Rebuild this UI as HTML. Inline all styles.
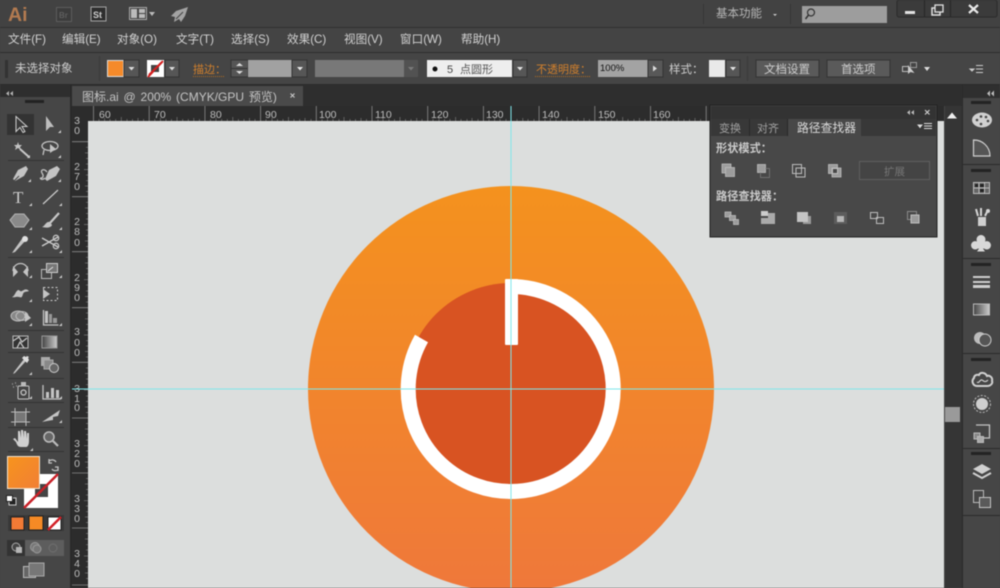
<!DOCTYPE html>
<html><head><meta charset="utf-8"><style>
html,body{margin:0;padding:0;width:1000px;height:588px;overflow:hidden;background:#444}
svg{display:block;filter:blur(.4px)}
text{font-family:"Liberation Sans","Noto Sans CJK SC",sans-serif}
.m{font-size:11.6px;fill:#d2d2d2}
.c{font-size:11.5px;fill:#cdcdcd}
.o{font-size:11px;fill:#d2802c}
.r{font-size:10.5px;fill:#bdbdbd}
.v{font-size:10.5px;fill:#bdbdbd;text-anchor:middle}
.i{fill:#c4c4c4;stroke:none}
.s{fill:none;stroke:#c4c4c4;stroke-width:1.3}
.p{font-size:11px;fill:#a0a0a0}
.b{font-size:11.2px;fill:#cbcbcb;font-weight:bold}
.k{fill:none;stroke:#bdbdbd;stroke-width:1}
.kf{fill:#9c9c9c;stroke:#bdbdbd;stroke-width:.8}
</style></head><body>
<svg width="1000" height="588" viewBox="0 0 1000 588" xmlns="http://www.w3.org/2000/svg">
<defs>
<linearGradient id="g" x1="0" y1="0" x2="0" y2="1"><stop offset="0" stop-color="#f4921e"/><stop offset="1" stop-color="#ef783b"/></linearGradient>
<linearGradient id="sw" x1="0" y1="0" x2="1" y2="1"><stop offset="0" stop-color="#f7941d"/><stop offset="1" stop-color="#f17f35"/></linearGradient>
<linearGradient id="gr" x1="0" y1="0" x2="1" y2="0"><stop offset="0" stop-color="#444"/><stop offset="1" stop-color="#ccc"/></linearGradient>
</defs>

<!-- chrome backgrounds -->
<rect width="1000" height="588" fill="#444"/>
<rect y="0" width="1000" height="27" fill="#424242"/>
<rect y="27" width="1000" height="1" fill="#303030"/>
<rect y="28" width="1000" height="24" fill="#444"/>
<rect y="52" width="1000" height="1" fill="#2e2e2e"/>
<rect y="53" width="1000" height="32" fill="#454545"/>
<rect y="84" width="1000" height="1" fill="#2b2b2b"/>
<rect y="85" width="1000" height="21" fill="#2e2e2e"/>

<!-- title bar -->
<text x="8" y="21" font-size="19.500" font-weight="bold" fill="#b27a50">Ai</text>
<rect x="56.500" y="7.500" width="15" height="14" fill="#3c3c3c" stroke="#5c5c5c"/>
<text x="59" y="18" font-size="8" fill="#5e5e5e" font-weight="bold">Br</text>
<rect x="91" y="7" width="15" height="14" fill="#2e2e2e" stroke="#a5a5a5"/>
<text x="93" y="18" font-size="9" fill="#cfcfcf" font-weight="bold">St</text>
<rect x="129.500" y="7.500" width="17" height="12" fill="#444" stroke="#aaa"/>
<rect x="131" y="9" width="6" height="9" fill="#bbb"/><rect x="139" y="9" width="6" height="4" fill="#bbb"/><rect x="139" y="14" width="6" height="4" fill="#bbb"/>
<path d="M149 12h6l-3 4z" fill="#bbb"/>
<path d="M188 7l-12 4-5 5 4 1-1 5 5-3 2 3 4-6z" fill="#a3a3a3"/>
<path d="M176 19l7-7" stroke="#444" stroke-width="1"/>
<rect x="703" y="4" width="1" height="20" fill="#363636"/>
<text x="716" y="17" font-size="11.500" fill="#b5b5b5">基本功能</text>
<path d="M773 14h4l-2 2z" fill="#ccc"/>
<rect x="790" y="4" width="1" height="20" fill="#363636"/>
<rect x="802" y="6" width="85" height="17" fill="#9d9d9d"/>
<circle cx="811" cy="12.500" r="3.500" fill="none" stroke="#333" stroke-width="1.200"/><path d="M808.500 15l-3 4" stroke="#333" stroke-width="1.500"/>
<rect x="897" y="0" width="100" height="17" rx="2" fill="#3b3b3b" stroke="#2a2a2a"/>
<rect x="924" y="0" width="1" height="17" fill="#272727"/><rect x="950" y="0" width="1" height="17" fill="#272727"/>
<rect x="905" y="11" width="10" height="3" fill="#e2e2e2"/>
<rect x="932" y="8" width="8" height="7" fill="none" stroke="#e2e2e2" stroke-width="1.500"/><rect x="935" y="5" width="8" height="7" fill="#3b3b3b" stroke="#e2e2e2" stroke-width="1.300"/>
<path d="M969 5l9 8M978 5l-9 8" stroke="#e8e8e8" stroke-width="2.200"/>

<!-- menu -->
<text class="m" x="8" y="43">文件(F)</text>
<text class="m" x="62" y="43">编辑(E)</text>
<text class="m" x="117" y="43">对象(O)</text>
<text class="m" x="176" y="43">文字(T)</text>
<text class="m" x="231" y="43">选择(S)</text>
<text class="m" x="287" y="43">效果(C)</text>
<text class="m" x="344" y="43">视图(V)</text>
<text class="m" x="400" y="43">窗口(W)</text>
<text class="m" x="461" y="43">帮助(H)</text>

<!-- control bar -->
<rect x="5" y="60" width="3" height="18" fill="#333"/>
<text class="c" x="15" y="72">未选择对象</text>
<rect x="99" y="56" width="1" height="25" fill="#3a3a3a"/>
<rect x="107.500" y="60.500" width="16" height="16" fill="#f58a2a" stroke="#ddd"/>
<rect x="124" y="60" width="15" height="17" fill="#565656" stroke="#333"/><path d="M128.500 67h6l-3 3.500z" fill="#ddd"/>
<rect x="147" y="60" width="17" height="17" fill="#fff"/><path d="M148 77l15-16" stroke="#d42020" stroke-width="2"/><rect x="151" y="65" width="8" height="7" fill="#444"/><path d="M149 75l13-13" stroke="#d42020" stroke-width="2"/>
<rect x="165" y="60" width="14" height="17" fill="#565656" stroke="#333"/><path d="M169 67h6l-3 3.500z" fill="#ddd"/>
<text class="o" x="193" y="73">描边：</text>
<path d="M193 76.500h31" stroke="#b06a20" stroke-dasharray="1 1"/>
<rect x="231" y="60" width="17" height="17" fill="#555" stroke="#333"/><path d="M236 66h7l-3.500-3zM236 71h7l-3.500 3z" fill="#ddd"/><path d="M231 68.500h17" stroke="#333"/>
<rect x="248" y="60" width="44" height="17" fill="#a1a1a1"/>
<rect x="292" y="60" width="15" height="17" fill="#565656" stroke="#333"/><path d="M297 67h6l-3 3.500z" fill="#e5e5e5"/>
<rect x="315" y="60" width="89" height="17" fill="#787878"/>
<rect x="404" y="60" width="14" height="17" fill="#525252"/><path d="M408 67h6l-3 3.500z" fill="#7a7a7a"/>
<rect x="427" y="60" width="85" height="17" fill="#eeeeee"/>
<circle cx="435" cy="69" r="2.500" fill="#111"/>
<text x="447" y="73" font-size="11" fill="#444">5</text><text x="460" y="73" font-size="11" fill="#555">点圆形</text>
<rect x="513" y="60" width="14" height="17" fill="#565656" stroke="#333"/><path d="M517 67h6l-3 3.500z" fill="#e5e5e5"/>
<text class="o" x="536" y="73">不透明度：</text>
<path d="M535 76.500h56" stroke="#b06a20" stroke-dasharray="1 1"/>
<rect x="598" y="60" width="50" height="17" fill="#a3a3a3"/>
<text x="600" y="71" font-size="9.500" fill="#111">100%</text>
<rect x="648" y="60" width="15" height="17" fill="#585858" stroke="#333"/><path d="M653 65.500v6l4-3z" fill="#ddd"/>
<text class="c" x="669" y="73">样式：</text>
<rect x="709" y="60" width="16" height="17" fill="#e9e9e9"/>
<rect x="726" y="60" width="14" height="17" fill="#565656" stroke="#333"/><path d="M730 67h6l-3 3.500z" fill="#e5e5e5"/>
<rect x="747" y="56" width="1" height="25" fill="#3a3a3a"/>
<rect x="756" y="60" width="63" height="17" fill="#5a5a5a" stroke="#333"/><text class="c" x="764" y="73">文档设置</text>
<rect x="827" y="60" width="63" height="17" fill="#5a5a5a" stroke="#333"/><text class="c" x="841" y="73">首选项</text>
<rect x="902.500" y="66.500" width="6" height="5" fill="none" stroke="#bbb"/><rect x="910.500" y="62.500" width="6" height="5" fill="none" stroke="#999"/><path d="M908 65l0 9 2.500-2 4 1z" fill="#ccc"/>
<path d="M924 67h6l-3 4z" fill="#ddd"/>
<path d="M970 69h4l-2 2zM976 65.500h7M976 69h7M976 72.500h7" stroke="#ccc" fill="#ccc"/>

<!-- tab -->
<rect x="72" y="86" width="231" height="20" fill="#4a4a4a"/>
<text x="82" y="101" font-size="12" word-spacing="1.500" fill="#c4c4c4">图标.ai @ 200%  (CMYK/GPU 预览)</text>
<path d="M290.500 93.500l4 4M294.500 93.500l-4 4" stroke="#c8c8c8" stroke-width="1.100"/>

<!-- rulers -->
<rect x="72" y="106" width="872" height="15" fill="#2c2c2c"/>
<rect x="72" y="106" width="16" height="482" fill="#2c2c2c"/>
<path d="M93.500 106v15M149.200 106v15M204.900 106v15M260.600 106v15M316.300 106v15M372 106v15M427.700 106v15M483.400 106v15M539.100 106v15M594.800 106v15M650.500 106v15M706.200 106v15" stroke="#8a8a8a" stroke-width=".8" fill="none"/>
<path d="M72 141.700h16M72 196.700h16M72 251.700h16M72 307.700h16M72 362.300h16M72 418h16M72 473h16M72 528h16M72 585h16" stroke="#8a8a8a" stroke-width=".8" fill="none"/>
<path d="M99 121v-2M104.600 121v-3M110 121v-2M115.700 121v-2M121.300 121v-4M127 121v-2M132.500 121v-2M138 121v-3M143.600 121v-2M154.800 121v-2M160.400 121v-3M166 121v-2M171.500 121v-2M177 121v-4M182.700 121v-2M188.300 121v-2M193.800 121v-3M199.400 121v-2M210.500 121v-2M216 121v-3M221.700 121v-2M227.300 121v-2M232.800 121v-4M238.400 121v-2M244 121v-2M249.500 121v-3M255 121v-2M266 121v-2M272 121v-3M277.500 121v-2M283 121v-2M288.500 121v-4M294 121v-2M299.700 121v-2M305 121v-3M311 121v-2M322 121v-2M327.500 121v-3M333 121v-2M339 121v-2M344 121v-4M350 121v-2M355.500 121v-2M361 121v-3M366.500 121v-2M378 121v-2M383 121v-3M389 121v-2M394.500 121v-2M400 121v-4M405.500 121v-2M411 121v-2M416.700 121v-3M422 121v-2M433 121v-2M439 121v-3M444.500 121v-2M450 121v-2M455.600 121v-4M461 121v-2M467 121v-2M472 121v-3M478 121v-2M489 121v-2M494.600 121v-3M500 121v-2M506 121v-2M517 121v-2M522.800 121v-3M528 121v-2M534 121v-2M545 121v-2M550.300 121v-3M556 121v-2M561.500 121v-2M567 121v-4M572.700 121v-2M578 121v-2M584 121v-3M589.400 121v-2M600.400 121v-2M606 121v-3M611.500 121v-2M617 121v-2M622.700 121v-4M628 121v-2M634 121v-2M639.400 121v-3M645 121v-2M656 121v-2M661.700 121v-3M667 121v-2M673 121v-2M678.400 121v-4M684 121v-2M689.500 121v-2M695 121v-3M700.600 121v-2" stroke="#777" stroke-width=".7" fill="none"/>
<path d="M88 147.300h-2M88 152.900h-3M88 158.500h-2M88 164h-2M88 169.600h-4M88 175h-2M88 180.700h-2M88 186h-3M88 191.500h-2M88 202.300h-2M88 208h-3M88 213.500h-2M88 219h-2M88 224.500h-4M88 230h-2M88 235.600h-2M88 241h-3M88 246.500h-2M88 257.300h-2M88 263h-3M88 268.500h-2M88 274h-2M88 279.700h-4M88 285h-2M88 291h-2M88 296.500h-3M88 302h-2M88 313h-2M88 318.800h-3M88 324.400h-2M88 330h-2M88 335h-4M88 340.700h-2M88 346h-2M88 351.500h-3M88 357h-2M88 368h-2M88 373.500h-3M88 379h-2M88 384.700h-2M88 390h-4M88 396h-2M88 401.500h-2M88 407h-3M88 412.500h-2M88 423.500h-2M88 429h-3M88 434.500h-2M88 440h-2M88 445.700h-4M88 451h-2M88 457h-2M88 462h-3M88 467.500h-2M88 478.500h-2M88 484h-3M88 489.500h-2M88 495h-2M88 500.700h-4M88 506h-2M88 511.700h-2M88 517h-3M88 522.500h-2M88 533.500h-2M88 539h-3M88 544.700h-2M88 550h-2M88 556h-4M88 561.500h-2M88 567h-2M88 573h-3M88 578.500h-2" stroke="#777" stroke-width=".7" fill="none"/>
<text class="r" x="99" y="118">60</text><text class="r" x="154" y="118">70</text><text class="r" x="210" y="118">80</text><text class="r" x="265" y="118">90</text><text class="r" x="319" y="118">100</text><text class="r" x="375" y="118">110</text><text class="r" x="431" y="118">120</text><text class="r" x="486" y="118">130</text><text class="r" x="542" y="118">140</text><text class="r" x="598" y="118">150</text><text class="r" x="653" y="118">160</text>
<text class="v" x="77" y="124">3</text><text class="v" x="77" y="134">0</text>
<text class="v" x="77" y="170">2</text><text class="v" x="77" y="180">7</text><text class="v" x="77" y="190">0</text>
<text class="v" x="77" y="225">2</text><text class="v" x="77" y="235">8</text><text class="v" x="77" y="246">0</text>
<text class="v" x="77" y="281">2</text><text class="v" x="77" y="291">9</text><text class="v" x="77" y="301">0</text>
<text class="v" x="77" y="335">3</text><text class="v" x="77" y="346">0</text><text class="v" x="77" y="356">0</text>
<text class="v" x="77" y="392">3</text><text class="v" x="77" y="402">1</text><text class="v" x="77" y="411">0</text>
<text class="v" x="77" y="447">3</text><text class="v" x="77" y="457">2</text><text class="v" x="77" y="467">0</text>
<text class="v" x="77" y="502">3</text><text class="v" x="77" y="512">3</text><text class="v" x="77" y="522">0</text>
<text class="v" x="77" y="557">3</text><text class="v" x="77" y="567">4</text><text class="v" x="77" y="577">0</text>

<!-- canvas -->
<rect x="88" y="121" width="856" height="467" fill="#dcdedd"/>
<circle cx="511" cy="389" r="203" fill="url(#g)"/>
<circle cx="511" cy="389" r="106" fill="#d85322"/>
<path d="M511 286.500A102.500 102.500 0 1 1 421.500 338.500" fill="none" stroke="#fff" stroke-width="15"/>
<rect x="505" y="279" width="13" height="66" rx="1" fill="#fff"/>
<path d="M511 121V588" stroke="#7fe6ea" stroke-width="1"/>
<path d="M88 389H944" stroke="#7fe6ea" stroke-width="1"/>
<path d="M511 106V121M72 389H88" stroke="#7fe6ea" stroke-width="1"/>

<!-- scrollbar -->
<rect x="945" y="106" width="17" height="482" fill="#353535"/>
<path d="M947 118.500h10l-5-6z" fill="#eee"/>
<rect x="945" y="407" width="15" height="15" fill="#9a9a9a"/>

<!-- left toolbar -->
<rect x="0" y="85" width="71" height="503" fill="#464646"/>
<rect x="0" y="85" width="71" height="12" fill="#2e2e2e"/>
<rect x="70" y="85" width="2" height="503" fill="#2a2a2a"/>
<path d="M9 91l-3 2.500 3 2.500zM13 91l-3 2.500 3 2.500z" fill="#b5b5b5"/>
<rect x="25" y="100" width="19" height="3" fill="#222"/>
<rect x="7" y="114" width="27" height="21" fill="#333"/>
<path d="M16 116.500v15l4-4 3 5 2-1-3-5h5z" fill="#3a3a3a" stroke="#cfcfcf"/>
<path d="M46 116v15l4-4 4 0z" fill="#bdbdbd"/>
<path d="M61 133h-3l3-3zM30 158h-3l3-3zM61 158h-3l3-3zM31 182h-3l3-3zM61 182h-3l3-3zM32 206h-3l3-3zM62 206h-3l3-3zM32 230h-3l3-3zM62 230h-3l3-3zM32 253h-3l3-3zM62 253h-3l3-3zM32 278h-3l3-3zM62 278h-3l3-3zM32 302h-3l3-3zM32 326h-3l3-3zM62 326h-3l3-3zM32 375h-3l3-3zM32 399h-3l3-3zM62 399h-3l3-3zM62 423h-3l3-3zM33 451h-3l3-3z" fill="#ccc"/>
<path d="M18 142l1 3 3 0-2 2 1 3-3-2-3 2 1-3-2-2 3 0z" class="i"/><path d="M20 149l9 8" stroke="#c8c8c8" stroke-width="2"/>
<ellipse cx="50" cy="146" rx="8" ry="4.500" class="s"/><path d="M44 149v4M50 144l6 5-6 4z" class="i"/><path d="M44 150l-1 5" class="s"/>
<rect x="8" y="160" width="56" height="1" fill="#333"/>
<path d="M26 166l-8 4-5 9 2 2 9-5 4-7z" class="i"/><path d="M14 181l5-5" stroke="#444"/>
<path d="M57 166l-8 4-4 9 2 2 9-5 4-7z" class="i"/><path d="M47 172c-3-4-7-2-5 1s1 5-1 5 1 3 4 0" class="s"/>
<text x="13" y="203" font-size="17" fill="#ccc" style="font-family:'Liberation Serif',serif">T</text>
<path d="M43 204l15-14" stroke="#ccc" stroke-width="1.200"/>
<path d="M15 214h9l5 6-5 7h-9l-5-7z" fill="#8a8a8a" stroke="#b5b5b5"/>
<path d="M59 213l-9 10" stroke="#c8c8c8" stroke-width="2.200"/><path d="M42 227c3-1 4-6 8-5l2 3c-1 3-6 3-10 2z" class="i"/>
<path d="M14 250l-2 3 3-1 12-13-1-2-2-1z" class="i"/><circle cx="25" cy="239" r="3" fill="#e0e0e0"/>
<path d="M42 238l16 9M42 246l16-9" stroke="#ccc" stroke-width="1.300"/><circle cx="56" cy="238" r="2.700" class="s"/><circle cx="56" cy="246" r="2.700" class="s"/>
<rect x="8" y="257" width="56" height="1" fill="#333"/>
<path d="M13 271a7.500 7.500 0 0 1 15 0" class="s"/><path d="M13 266v11l5-5zM28 266v11l-5-5z" class="i"/>
<rect x="41.500" y="269.500" width="10" height="9" fill="none" stroke="#bbb"/><rect x="46.500" y="263.500" width="11" height="9" fill="#777" stroke="#ccc"/><path d="M48 271l5-4" stroke="#ddd"/>
<path d="M12 297c3-1 3-5 6-7 2 0 2 2 4 1s4-3 7 0c-2 1-5 0-6 3s-1 4-4 3-4 1-7 0z" class="i"/>
<rect x="43.500" y="287.500" width="14" height="13" fill="none" stroke="#ccc" stroke-dasharray="2 2"/><path d="M43 289v10l7-5z" class="i"/>
<ellipse cx="18" cy="316" rx="7" ry="5" fill="#888" stroke="#bbb"/><ellipse cx="22" cy="316" rx="6" ry="4.500" fill="none" stroke="#bbb"/><path d="M25 312l6 6-6 4z" class="i"/>
<path d="M43.500 310v15h15" class="s"/><rect x="45" y="311" width="3" height="12" class="i"/><rect x="49" y="314" width="3" height="9" fill="#999"/><rect x="53" y="318" width="4" height="5" fill="#999"/>
<rect x="8" y="330" width="56" height="1" fill="#333"/>
<rect x="13" y="336" width="15" height="12" fill="#333" stroke="#bbb"/><path d="M13 341l6-4 3 5 5-4M17 348l3-6 4 6" class="s"/>
<rect x="42" y="336" width="15" height="12" fill="url(#gr)" stroke="#999"/>
<rect x="8" y="352" width="56" height="1" fill="#333"/>
<path d="M14 372l-1 2 2-1 11-12-2-2z" class="i"/><path d="M22 358l5 5 2-3-1-2 1-1-2-1-1 1-2-1z" fill="#ddd"/>
<rect x="41" y="357" width="9" height="9" fill="#aaa"/><rect x="44" y="360" width="9" height="9" fill="#888" stroke="#aaa"/><circle cx="54" cy="368" r="4.500" fill="#666" stroke="#ccc"/>
<rect x="8" y="378" width="56" height="1" fill="#333"/>
<rect x="18" y="386" width="11" height="13" rx="1" fill="#444" stroke="#c5c5c5"/><circle cx="23.500" cy="392.500" r="2.500" class="s"/><rect x="21" y="382" width="5" height="4" fill="#bbb"/><path d="M12 384h1M15 383h1M13 387h1M16 386h1" stroke="#999" stroke-width="1.500"/>
<path d="M43 385v14h18" class="s"/><rect x="46" y="392" width="3" height="6" class="i"/><rect x="51" y="388" width="3" height="10" class="i"/><rect x="56" y="390" width="3" height="8" class="i"/>
<rect x="8" y="402" width="56" height="1" fill="#333"/>
<rect x="15" y="412" width="11" height="10" fill="#777"/><path d="M15 408v18M26 408v18M11 412h19M11 422h19" stroke="#bbb"/>
<path d="M42 422l18-12-2 6-5 1 0 3-6 1z" class="i"/>
<rect x="8" y="427" width="56" height="1" fill="#333"/>
<path d="M13 439l3 3c1 3 2 5 5 5h5c2 0 3-3 3-6v-8h-2v6l-1-8h-2v7l-1-8h-2v8l-1-7h-2v11l-3-4z" fill="#d0d0d0"/>
<circle cx="49" cy="437" r="5" fill="#666" stroke="#bbb" stroke-width="1.500"/><path d="M53 441l5 5" stroke="#bbb" stroke-width="2.200"/>
<rect x="8" y="451" width="56" height="1" fill="#333"/>
<!-- swatches -->
<path d="M49 461c3-2 6-1 7 1M49 459v4h3M58 470c-2 1-5 1-6-1M58 471v-4h-3" class="s"/>
<rect x="24" y="474" width="34" height="34" fill="#fff"/>
<rect x="35" y="484" width="13" height="13" fill="#444"/>
<path d="M24 508l34-34" stroke="#c92028" stroke-width="2.500"/>
<rect x="7.500" y="456.500" width="32" height="32" fill="url(#sw)" stroke="#f3e4d0"/>
<rect x="9" y="498" width="7" height="7" fill="#222" stroke="#ccc"/><rect x="6.500" y="495.500" width="6" height="6" fill="#fff" stroke="#222"/>
<rect x="8" y="515" width="56" height="16" fill="#393939"/>
<rect x="11" y="517" width="13" height="13" fill="#f27a35" stroke="#222"/>
<rect x="29" y="516" width="14" height="14" fill="#f58a25" stroke="#222"/>
<rect x="48" y="517" width="13" height="13" fill="#fff" stroke="#222"/><path d="M48 530l13-13" stroke="#d32027" stroke-width="2.500"/>
<rect x="7" y="540" width="18" height="16" fill="#333"/>
<rect x="25" y="540" width="39" height="16" fill="#5d5d5d"/>
<circle cx="16" cy="547" r="4" fill="#444" stroke="#aaa"/><rect x="16" y="547" width="6" height="6" fill="#b5b5b5"/>
<circle cx="35" cy="547" r="4.500" fill="#777" stroke="#999"/><circle cx="37" cy="549" r="4" fill="#777" stroke="#999"/>
<circle cx="53" cy="548" r="4" fill="none" stroke="#6f6f6f"/>
<rect x="23.500" y="566.500" width="12" height="11" fill="#666" stroke="#bbb"/><rect x="29" y="563" width="15" height="13" fill="#777" stroke="#aaa"/>

<!-- right dock -->
<rect x="962" y="85" width="38" height="503" fill="#464646"/>
<rect x="962" y="85" width="38" height="13" fill="#2f2f2f"/>
<rect x="962" y="85" width="1" height="503" fill="#2a2a2a"/>
<path d="M990 90.500l-3 3 3 3zM994 90.500l-3 3 3 3z" fill="#bdbdbd"/>
<rect x="971" y="101" width="20" height="3" fill="#232323"/>
<rect x="971" y="169" width="20" height="3" fill="#232323"/>
<rect x="971" y="263" width="20" height="3" fill="#232323"/>
<rect x="971" y="358" width="20" height="3" fill="#232323"/>
<rect x="971" y="452" width="20" height="3" fill="#232323"/>
<rect x="962" y="164" width="38" height="1" fill="#2a2a2a"/>
<rect x="962" y="258" width="38" height="1" fill="#2a2a2a"/>
<rect x="962" y="353" width="38" height="1" fill="#2a2a2a"/>
<rect x="962" y="448" width="38" height="1" fill="#2a2a2a"/>
<rect x="962" y="515" width="38" height="1" fill="#2a2a2a"/>
<ellipse cx="982" cy="120" rx="10" ry="7.500" fill="#d0d0d0"/>
<circle cx="977" cy="120" r="1.300" fill="#444"/><circle cx="981" cy="116.500" r="1.300" fill="#444"/><circle cx="986" cy="117" r="1.300" fill="#444"/><circle cx="988" cy="121" r="1.300" fill="#444"/><circle cx="981" cy="124" r="1.300" fill="#444"/>
<path d="M973.500 140v16h16.500a16 16 0 0 0-16.500-16z" fill="#555" stroke="#d0d0d0" stroke-width="1.200"/>
<rect x="973.500" y="182.500" width="16" height="11" fill="#666" stroke="#bbb"/>
<path d="M974 188h15M979 183v10M984.500 183v10" stroke="#bbb"/><rect x="975" y="184" width="3" height="3" fill="#222"/><rect x="980" y="184" width="4" height="3" fill="#222"/><rect x="980" y="189" width="4" height="3" fill="#222"/>
<rect x="978" y="217" width="8" height="9" fill="#cfcfcf"/><path d="M978 216l-2-7M981 216l0-8M985 216l3-6" stroke="#d5d5d5" stroke-width="2"/><circle cx="988" cy="211" r="2" fill="#d5d5d5"/>
<path d="M981 235a4.500 4.500 0 0 1 4 6.500 4.200 4.200 0 1 1-1 7h-1l2 3h-8l2-3h-1a4.200 4.200 0 1 1-1-7 4.500 4.500 0 0 1 4-6.500z" fill="#d8d8d8"/>
<rect x="973" y="276" width="17" height="2" fill="#cfcfcf"/><rect x="973" y="281" width="17" height="2" fill="#cfcfcf"/><rect x="973" y="285" width="17" height="3" fill="#cfcfcf"/>
<rect x="973.500" y="304" width="16" height="11" fill="url(#gr)" stroke="#bbb"/>
<circle cx="980" cy="338" r="6" fill="#bbb"/><circle cx="985" cy="340" r="6" fill="#555" stroke="#ccc"/>
<path d="M974 378c-3 3-1 8 3 8h10c4 0 6-3 5-5 1-4-3-6-5-5-2-4-7-4-8-1-3-1-5 1-5 3z" fill="none" stroke="#d0d0d0" stroke-width="2"/><path d="M977 382c2 2 3-3 5-2s3 3 6 0" fill="none" stroke="#d0d0d0" stroke-width="1.200"/>
<circle cx="982" cy="404" r="6" fill="#cfcfcf"/><circle cx="982" cy="404" r="8.500" fill="none" stroke="#bbb" stroke-dasharray="2 1.500"/>
<path d="M976 425h13.500v13h-6" class="s"/>
<rect x="974" y="433" width="6" height="6" fill="#888" stroke="#bbb"/><rect x="977.500" y="436.500" width="6" height="6" fill="#aaa" stroke="#bbb"/>
<path d="M982 464l9 5-9 5-9-5z" fill="#d0d0d0"/><path d="M973 473l9 5 9-5" fill="none" stroke="#d0d0d0" stroke-width="2"/>
<rect x="973.500" y="490.500" width="10" height="12" fill="none" stroke="#bbb"/><rect x="979.500" y="497.500" width="11" height="10" fill="#5a5a5a" stroke="#c5c5c5"/>

<!-- pathfinder panel -->
<rect x="710" y="105" width="227" height="132" fill="#484848" stroke="#222"/>
<rect x="711" y="106" width="225" height="13" fill="#333"/>
<rect x="711" y="119" width="225" height="17" fill="#383838"/>
<path d="M910 110l-3 2.500 3 2.500zM914 110l-3 2.500 3 2.500z" fill="#bbb"/>
<path d="M925 110l4.500 4.500M929.500 110l-4.500 4.500" stroke="#ccc" stroke-width="1.200"/>
<rect x="749" y="119" width="1" height="17" fill="#282828"/><rect x="787" y="119" width="1" height="17" fill="#282828"/>
<rect x="788" y="119" width="73" height="17" fill="#484848"/>
<text class="p" x="719" y="132">变换</text>
<text class="p" x="757" y="132">对齐</text>
<text x="797" y="132" font-size="11.800" fill="#dadada">路径查找器</text>
<path d="M918 125h4l-2 2.500zM924 123.500h8M924 126h8M924 128.500h8" stroke="#ddd" fill="#ddd" stroke-width=".9"/>
<text class="b" x="716" y="152">形状模式：</text>
<rect x="859.500" y="161.500" width="70" height="18" fill="#444" stroke="#5f5f5f"/>
<text x="884" y="175" font-size="10.500" fill="#777">扩展</text>
<!-- shape mode icons -->
<rect x="722" y="164" width="9" height="9" class="kf"/><rect x="725.500" y="167.500" width="9" height="9" class="kf"/>
<rect x="757.500" y="164.500" width="8" height="8" class="kf"/><path d="M765.500 168.500h4v9h-9v-5" stroke="#707070" fill="none"/>
<rect x="792.500" y="164.500" width="9" height="9" class="k"/><rect x="796" y="168" width="9" height="9" class="k"/>
<rect x="828.500" y="164.500" width="9" height="9" class="kf"/><rect x="832" y="168" width="9" height="9" class="kf"/><rect x="832.500" y="168.500" width="5" height="5" fill="#484848" stroke="#bdbdbd"/>
<text class="b" x="716" y="200">路径查找器：</text>
<!-- pathfinder icons -->
<rect x="725" y="212" width="6" height="5" class="kf"/><rect x="729.500" y="215.500" width="6" height="5" class="kf"/><rect x="733.500" y="219.500" width="5" height="5" class="kf"/>
<rect x="761" y="211" width="7" height="5" fill="#ccc"/><rect x="768" y="213" width="7" height="11" fill="#aaa"/><rect x="761" y="218" width="7" height="6" fill="#aaa"/>
<rect x="797" y="212" width="11" height="10" fill="#c4c4c4"/><path d="M808 216h3v8h-8v-2h5z" fill="#9a9a9a"/>
<rect x="834" y="212" width="13" height="12" fill="#5c5c5c"/><rect x="837" y="216" width="7" height="6" fill="#b5b5b5"/>
<rect x="870.500" y="212.500" width="7" height="6" class="k"/><rect x="876.500" y="217.500" width="7" height="6" class="k"/>
<rect x="907.500" y="211.500" width="9" height="8" fill="#484848" stroke="#8a8a8a"/><rect x="911" y="215" width="8" height="8" fill="#9a9a9a" stroke="#c0c0c0"/>
</svg>
</body></html>
